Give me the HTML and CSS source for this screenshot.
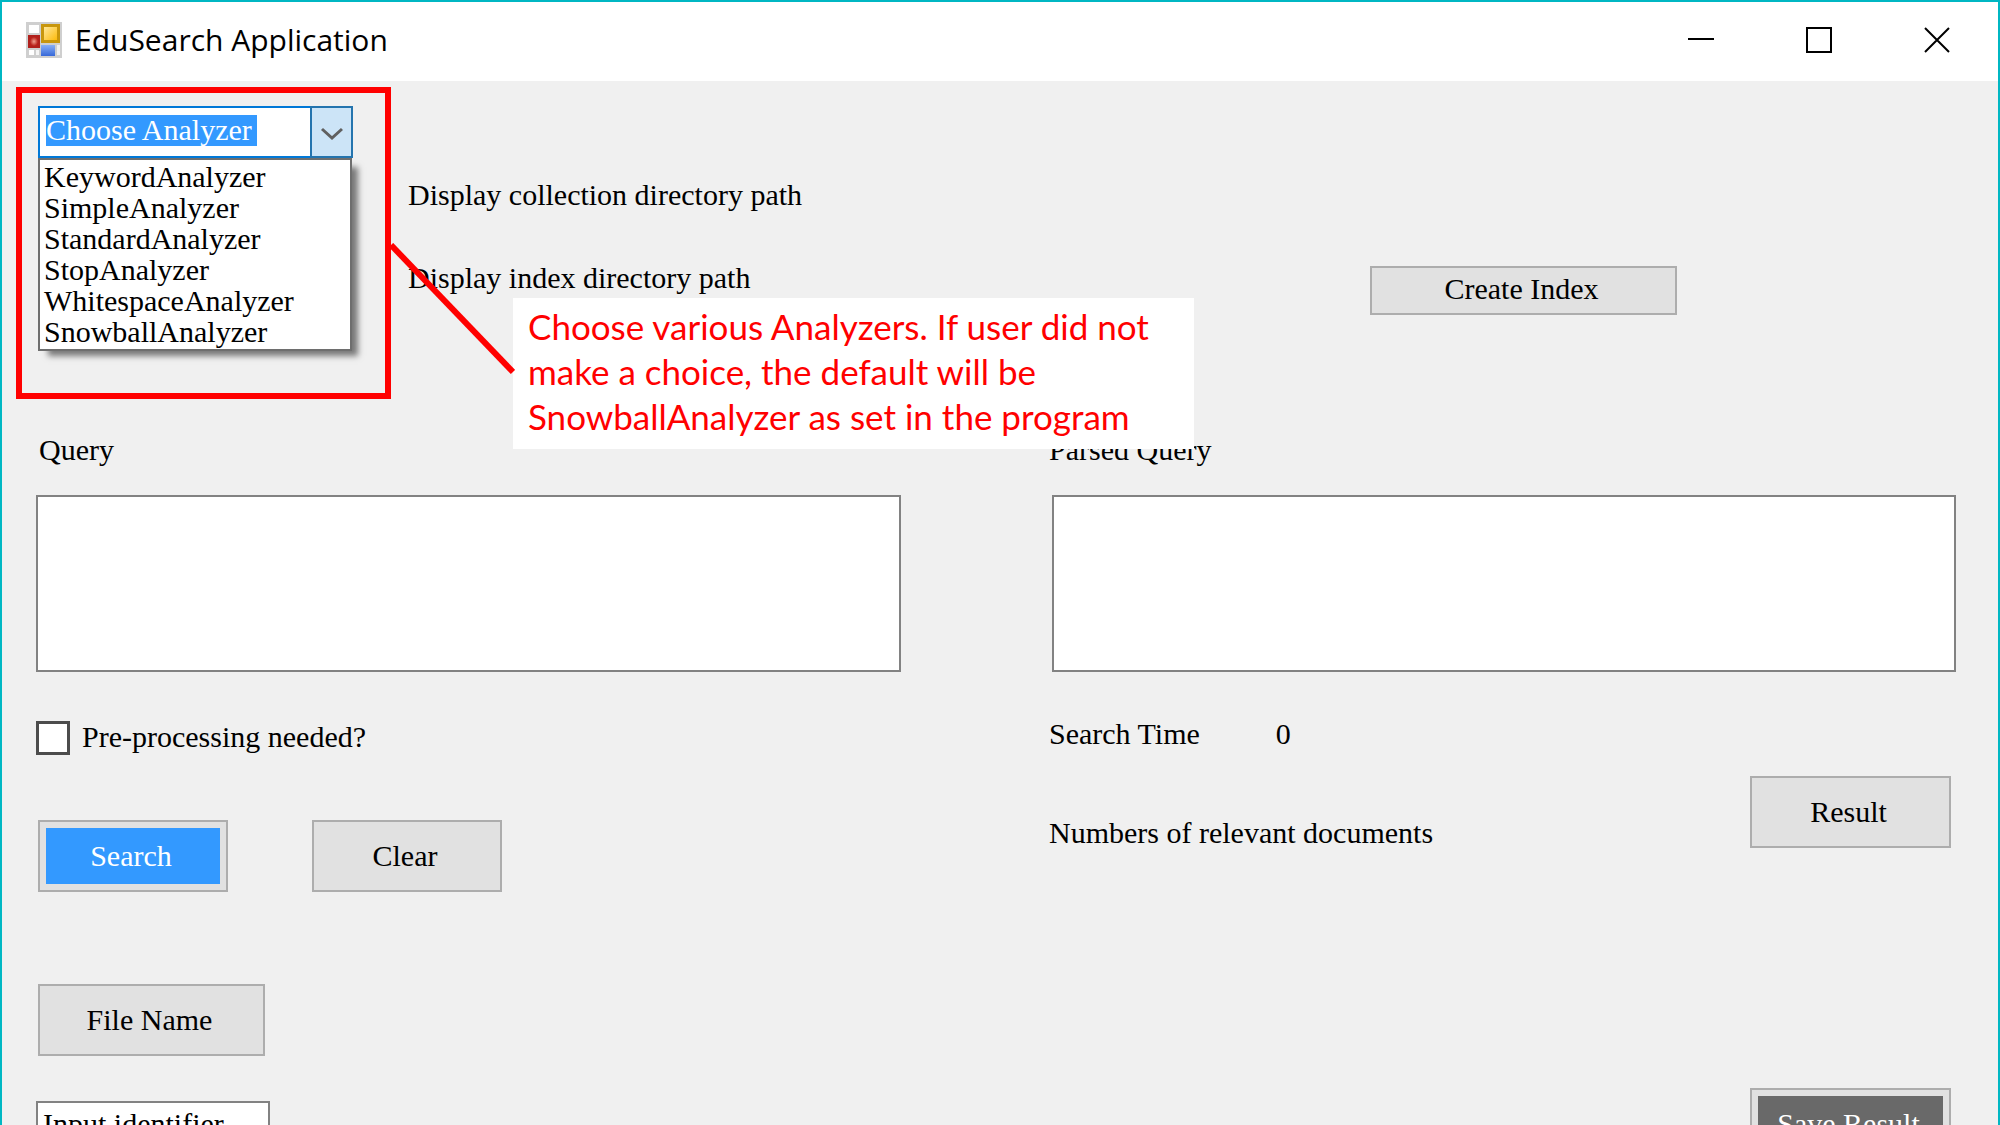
FILE: index.html
```html
<!DOCTYPE html>
<html lang="en">
<head>
<meta charset="utf-8">
<title>EduSearch Application</title>
<link rel="stylesheet" href="styles.css">
</head>
<body>
<div class="window">
  <header class="titlebar">
    <svg class="app-icon" viewBox="0 0 36 36" aria-hidden="true">
      <defs>
        <linearGradient id="gold" x1="0" y1="0" x2="1" y2="1"><stop offset="0" stop-color="#ffe79a"/><stop offset="1" stop-color="#fdbb0c"/></linearGradient>
        <linearGradient id="blue" x1="0" y1="0" x2="0" y2="1"><stop offset="0" stop-color="#86aef6"/><stop offset="1" stop-color="#3768d8"/></linearGradient>
        <radialGradient id="red"><stop offset="0" stop-color="#f0a090"/><stop offset="1" stop-color="#b8201a"/></radialGradient>
      </defs>
      <rect width="36" height="36" fill="#cfcfcf"/>
      <rect x="3" y="3" width="10" height="8" fill="#fff"/>
      <rect x="2" y="13" width="12" height="13" fill="#b0201c"/>
      <rect x="4" y="15" width="8" height="9" fill="url(#red)"/>
      <rect x="15" y="2" width="19" height="19" fill="#c8960c"/>
      <rect x="18" y="5" width="13" height="13" fill="url(#gold)"/>
      <rect x="15" y="23" width="14" height="11" fill="url(#blue)"/>
      <rect x="3" y="28" width="5" height="5" fill="#fff"/>
      <rect x="10" y="28" width="3" height="5" fill="#f4f4f4"/>
      <rect x="31" y="23" width="3" height="10" fill="#f0f0f0"/>
    </svg>
    <h1 class="title">EduSearch Application</h1>
    <div class="controls">
      <button type="button" class="control" aria-label="Minimize"><svg viewBox="0 0 26 26"><path d="M0 12H26"/></svg></button>
      <button type="button" class="control" aria-label="Maximize"><svg viewBox="0 0 26 26"><path d="M1 1H25V25H1Z"/></svg></button>
      <button type="button" class="control" aria-label="Close"><svg viewBox="0 0 26 26"><path d="M1 1L25 25M25 1L1 25"/></svg></button>
    </div>
  </header>

  <main class="client">
    <section class="setup">
      <div class="combo">
        <select class="combo-field" aria-label="Analyzer">
          <option>Choose Analyzer</option>
          <option>KeywordAnalyzer</option>
          <option>SimpleAnalyzer</option>
          <option>StandardAnalyzer</option>
          <option>StopAnalyzer</option>
          <option>WhitespaceAnalyzer</option>
          <option>SnowballAnalyzer</option>
        </select>
        <span class="combo-arrow"><svg viewBox="0 0 24 14" aria-hidden="true"><path d="M2 2L12 11L22 2"/></svg></span>
        <ul class="combo-list" role="listbox" aria-label="Analyzers">
          <li role="option">KeywordAnalyzer</li>
          <li role="option">SimpleAnalyzer</li>
          <li role="option">StandardAnalyzer</li>
          <li role="option">StopAnalyzer</li>
          <li role="option">WhitespaceAnalyzer</li>
          <li role="option">SnowballAnalyzer</li>
        </ul>
      </div>
      <div class="paths">
        <span>Display collection directory path</span>
        <span>Display index directory path</span>
      </div>
      <button type="button" class="button button-create">Create Index</button>
    </section>

    <div class="panes">
      <section class="pane">
        <label class="caption caption-inset" for="query">Query</label>
        <textarea class="box" id="query"></textarea>
        <label class="check"><input type="checkbox"> Pre-processing needed?</label>
        <div class="actions">
          <button type="button" class="button button-active"><span>Search</span></button>
          <button type="button" class="button">Clear</button>
        </div>
        <button type="button" class="button button-file">File Name</button>
        <input class="identifier" type="text" value="Input identifier" aria-label="Input identifier">
      </section>

      <section class="pane">
        <label class="caption" for="parsed">Parsed Query</label>
        <textarea class="box box-parsed" id="parsed"></textarea>
        <p class="time"><span>Search Time</span><span>0</span></p>
        <div class="results">
          <p class="count">Numbers of relevant documents</p>
          <button type="button" class="button button-result">Result</button>
        </div>
        <button type="button" class="button button-result button-save"><span>Save Result</span></button>
      </section>
    </div>
  </main>

  <div class="highlight"></div>
  <p class="note">Choose various Analyzers. If user did not<br>make a choice, the default will be<br>SnowballAnalyzer as set in the program</p>
  <svg class="leader" viewBox="0 0 126 132" aria-hidden="true"><path d="M2 2L124 129"/></svg>
</div>
</body>
</html>
```

FILE: styles.css
```css
* { box-sizing: border-box; }

body {
  margin: 0;
  height: 100vh;
  overflow: hidden;
  background: #f0f0f0;
  color: #000;
  font: 30px/34px "Liberation Serif", serif;
}

p, h1, ul { margin: 0; padding: 0; }
button, input, textarea, select { font: inherit; color: inherit; border-radius: 0; }

.window {
  position: relative;
  min-height: 100vh;
  border: 2px solid #00b7c3;
  border-bottom: 0;
}

/* Title bar */
.titlebar {
  display: flex;
  align-items: center;
  height: 79px;
  padding: 0 2px 4px 24px;
  background: #fff;
}
.app-icon { width: 36px; height: 36px; }
.title {
  flex: 1;
  margin-left: 13px;
  font: 30px/40px "Open Sans", sans-serif;
}
.controls { display: flex; }
.control {
  display: grid;
  place-items: center;
  width: 118px;
  height: 75px;
  padding: 0;
  border: 0;
  background: none;
}
.control svg { width: 26px; height: 26px; fill: none; stroke: #000; stroke-width: 2; }

/* Client area */
.client { padding: 0 42px 0 34px; }

.setup {
  display: grid;
  grid-template-columns: 370px 1fr 307px;
  align-items: start;
  height: 352px;
  padding: 25px 279px 0 2px;
}

.combo {
  position: relative;
  display: grid;
  grid-template-columns: 1fr 43px;
  width: 315px;
  height: 52px;
}
.combo-field {
  grid-area: 1 / 1 / 2 / 3;
  padding: 0 50px 4px 6px;
  appearance: none;
  border: 2px solid #0078d7;
  background: #fff linear-gradient(#3399ff, #3399ff) 6px 7px / 211px 31px no-repeat;
  color: #fff;
}
.combo-arrow {
  grid-area: 1 / 2;
  display: grid;
  place-items: center;
  padding-top: 4px;
  border: 2px solid #2474ae;
  background: #cce4f7;
  pointer-events: none;
}
.combo-arrow svg { width: 24px; height: 14px; fill: none; stroke: #606060; stroke-width: 3; }
.combo-list {
  position: absolute;
  top: 100%;
  left: 0;
  width: 314px;
  padding: 1px 4px 2px;
  border: 2px solid #6e6e6e;
  background: #fff;
  box-shadow: 8px 7px 6px -2px rgba(0, 0, 0, .5);
  line-height: 31px;
  list-style: none;
}

.paths { display: grid; gap: 49px; padding-top: 72px; }

.button {
  width: 190px;
  height: 72px;
  padding: 0 4px 0 0;
  border: 2px solid #adadad;
  background: #e1e1e1;
}
.button-create { width: 100%; height: 49px; margin-top: 160px; padding-bottom: 3px; }
.button-active, .button-save { padding: 6px; }
.button-active span, .button-save span {
  display: grid;
  place-items: center;
  height: 100%;
  padding: 0 4px 0 0;
  background: #3399ff;
  color: #fff;
}

.panes {
  display: grid;
  grid-template-columns: 865fr 907fr;
  gap: 148px;
}
.pane { display: flex; flex-direction: column; align-items: flex-start; }
.caption-inset { padding-left: 3px; }

.box {
  width: 100%;
  height: 177px;
  margin-top: 28px;
  padding: 4px;
  border: 2px solid #828282;
  background: #fff;
  resize: none;
}
.box-parsed { width: calc(100% - 3px); margin-left: 3px; }

.check { display: flex; gap: 12px; margin-top: 49px; line-height: 32px; }
.check input {
  width: 34px;
  height: 34px;
  margin: 0;
  appearance: none;
  border: 3px solid #4c4c4c;
  background: #fff;
}

.actions { display: flex; gap: 84px; margin: 65px 0 0 2px; }
.button-file { width: 227px; margin: 92px 0 0 2px; }
.identifier {
  width: 234px;
  height: 46px;
  margin-top: 45px;
  padding: 0 5px;
  border: 2px solid #828282;
  background: #fff;
}

.time { display: flex; gap: 76px; margin-top: 45px; }
.results {
  display: flex;
  justify-content: space-between;
  width: 100%;
  margin-top: 25px;
  padding-right: 5px;
}
.count { padding-top: 40px; }
.button-result { width: 201px; }
.button-save { align-self: flex-end; margin: 238px 5px 0 0; }
.button-save span { background: #696969; }

/* Annotation over the window */
.highlight {
  position: absolute;
  top: 85px;
  left: 14px;
  width: 375px;
  height: 312px;
  border: 6px solid #f00;
  pointer-events: none;
}
.note {
  position: absolute;
  top: 296px;
  left: 511px;
  width: 681px;
  height: 151px;
  padding: 6px 15px;
  background: #fff;
  color: #f00;
  font: 35px/45px Lato, sans-serif;
  white-space: nowrap;
}
.leader {
  position: absolute;
  top: 241px;
  left: 387px;
  width: 126px;
  height: 132px;
  fill: none;
  stroke: #f00;
  stroke-width: 6;
}
```
